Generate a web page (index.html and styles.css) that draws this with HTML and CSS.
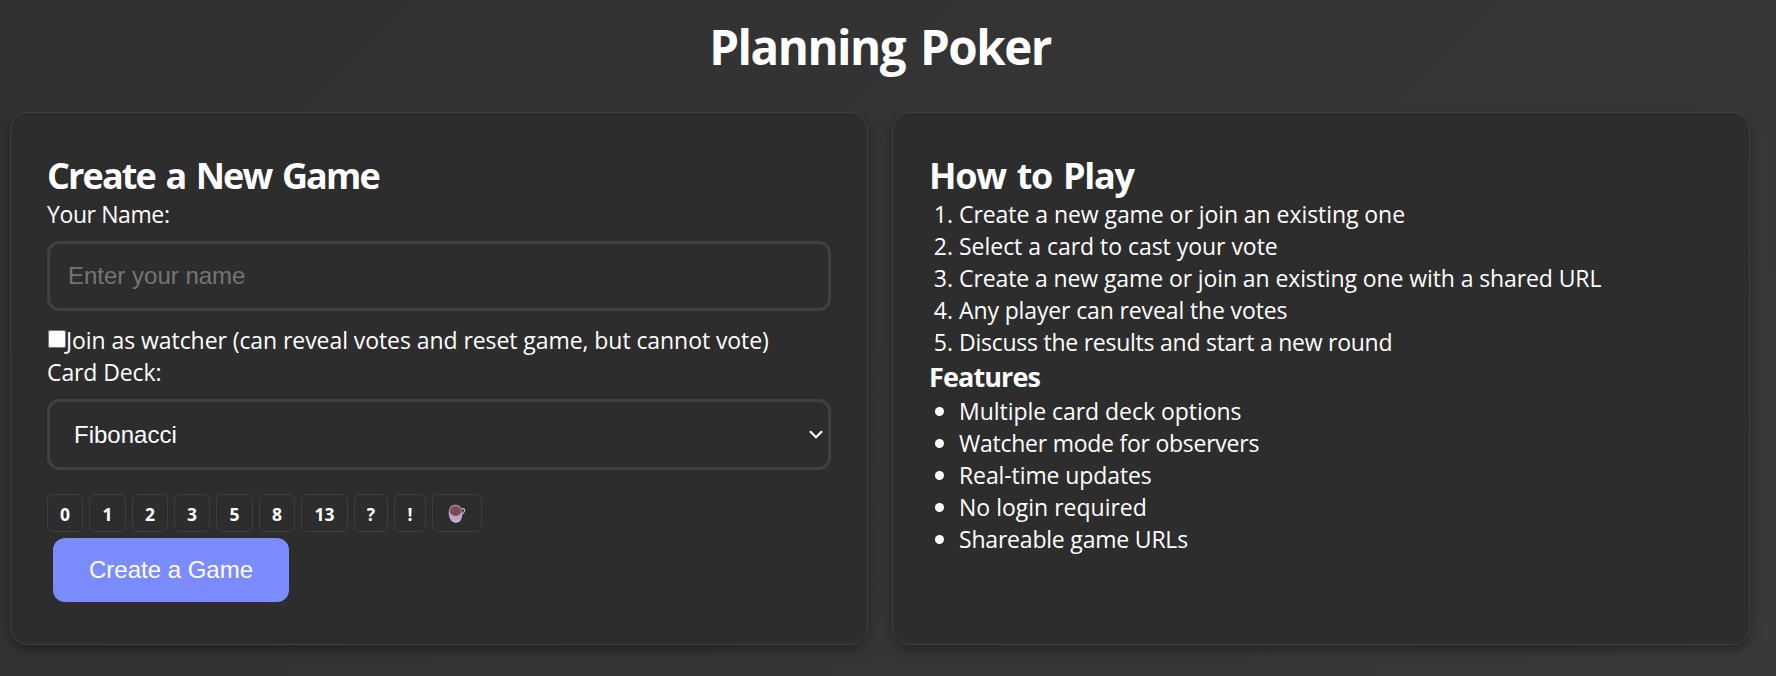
FILE: index.html
```html
<!DOCTYPE html>
<html lang="en">
<head>
<meta charset="utf-8">
<title>Planning Poker</title>
<link rel="stylesheet" href="styles.css">
</head>
<body>
<main class="page">
  <h1 class="title"><span>Planning Poker</span></h1>
  <div class="columns">
    <section class="card">
      <h2 class="heading"><span class="t-create">Create a New Game</span></h2>
      <label class="label t-name" for="name">Your Name:</label>
      <input class="field" id="name" type="text" placeholder="Enter your name">
      <label class="watcher"><input class="check" type="checkbox"><span class="t-join">Join as watcher (can reveal votes and reset game, but cannot vote)</span></label>
      <label class="label t-deck" for="deck">Card Deck:</label>
      <div class="select-wrap">
        <select class="field select" id="deck"><option>Fibonacci</option></select>
        <svg class="arrow" viewBox="0 0 14 9" width="14" height="9"><path d="M1 1.2 7 7.2 13 1.2" fill="none" stroke="#fff" stroke-width="2.200"/></svg>
      </div>
      <div class="deck">
        <span class="chip">0</span><span class="chip w37">1</span><span class="chip">2</span><span class="chip">3</span><span class="chip w37">5</span><span class="chip">8</span><span class="chip w47">13</span><span class="chip w34">?</span><span class="chip w32">!</span><span class="chip w50"><svg class="cup" viewBox="0 0 18 19" width="18" height="19"><path d="M13 5c2.200-1 4 0 3.500 1.800-.4 1.700-1.800 3.100-3.200 4.100" fill="none" stroke="#cbbbdc" stroke-width="1.200"/><path d="M.9 6C0 13 2.500 18.500 8 18.500S15 13 14 6z" fill="#b9a5ce"/><path d="M2.600 15c2 2.700 8 2.900 10.400-.3-.9 2.500-2.800 3.800-5.200 3.800-2.300 0-4.100-1.400-5.200-3.500z" fill="#d6c8e5"/><ellipse cx="7.400" cy="6" rx="6.300" ry="5.500" fill="#a07f92"/><ellipse cx="7.600" cy="7.200" rx="5.500" ry="4.800" fill="#7e4a4e"/></svg></span>
      </div>
      <button class="create" type="button">Create a Game</button>
    </section>
    <section class="card">
      <h2 class="heading"><span class="t-how">How to Play</span></h2>
      <ol class="list">
        <li><span class="s1">Create a new game or join an existing one</span></li>
        <li><span class="s2">Select a card to cast your vote</span></li>
        <li><span class="s3">Create a new game or join an existing one with a shared URL</span></li>
        <li><span class="s4">Any player can reveal the votes</span></li>
        <li><span class="s5">Discuss the results and start a new round</span></li>
      </ol>
      <h3 class="subheading">Features</h3>
      <ul class="bullets">
        <li><span class="f1">Multiple card deck options</span></li>
        <li><span class="f2">Watcher mode for observers</span></li>
        <li><span class="f3">Real-time updates</span></li>
        <li><span class="f4">No login required</span></li>
        <li><span class="f5">Shareable game URLs</span></li>
      </ul>
    </section>
  </div>
</main>
</body>
</html>
```
FILE: styles.css
```css
* { box-sizing: border-box; margin: 0; padding: 0; }
body {
  height: 676px;
  overflow: hidden;
  color: #fff;
  font: 23px/32px "Open Sans", "Noto Sans", sans-serif;
  background: linear-gradient(135deg, #303030, #393939);
}
.page { width: 1760px; padding: 14px 10px 0; }
.title { height: 98px; font-size: 47.500px; line-height: 66px; font-weight: 700; text-align: center; letter-spacing: -1.500px; word-spacing: 4px; }
.columns { display: grid; grid-template-columns: 858px 858px; gap: 24px; }
.card {
  height: 533px;
  padding: 38px 36px 0;
  background: #2d2d2d;
  border: 1px solid #404040;
  border-radius: 18px;
  box-shadow: 0 6px 12px rgba(0, 0, 0, .3);
}
.heading { height: 47px; font-size: 36px; line-height: 50px; font-weight: 700; }
.t-create { letter-spacing: -1.880px; word-spacing: 3px; }
.t-how { letter-spacing: -1.320px; word-spacing: 3px; }
.label { display: block; }
.t-name { letter-spacing: -.400px; }
.t-deck { letter-spacing: -.100px; }
.t-join { letter-spacing: -.070px; }
.field {
  display: block;
  width: 784px;
  height: 70px;
  margin: 11px 0 13px;
  padding: 0 18px;
  color: #fff;
  background: #2d2d2d;
  border: 3px solid #404040;
  border-radius: 12px;
  font: 24px "Liberation Sans", Arial, sans-serif;
}
.field::placeholder { color: #757575; }
.watcher { display: flex; height: 32px; }
.check { width: 18px; height: 18px; margin: 6px 0 0 1px; flex: none; }
.select-wrap { position: relative; margin-bottom: 24px; }
.select { height: 71px; margin-bottom: 0; padding-left: 24px; appearance: none; }
.arrow { position: absolute; right: 8px; top: 31px; }
.deck { display: flex; gap: 6px; height: 38px; margin-bottom: 6px; }
.chip {
  display: flex;
  align-items: center;
  justify-content: center;
  width: 36px;
  height: 38px;
  padding-top: 1px;
  border: 1px solid #404040;
  border-radius: 6px;
  font-size: 17.500px;
  font-weight: 700;
}
.w37 { width: 37px; }
.w47 { width: 47px; }
.w34 { width: 34px; }
.w32 { width: 32px; }
.w50 { width: 50px; }
.create {
  display: block;
  width: 236px;
  height: 64px;
  margin-left: 6px;
  color: #fff;
  background: #7b8cff;
  border: 0;
  border-radius: 12px;
  font: 24px "Liberation Sans", Arial, sans-serif;
}
.list { margin-bottom: 1px; padding-left: 30px; }
.bullets { list-style: none; }
.bullets li { display: flex; }
.bullets li::before {
  content: "";
  width: 9px;
  height: 9px;
  margin: 12px 15.500px 0 5.500px;
  background: #fff;
  border-radius: 50%;
}
.s1 { letter-spacing: -.060px; }
.s2 { letter-spacing: -.030px; }
.s3 { letter-spacing: -.100px; }
.s4 { letter-spacing: -.130px; }
.s5 { letter-spacing: -.250px; }
.f1 { letter-spacing: -.040px; }
.f2 { letter-spacing: -.250px; }
.f3 { letter-spacing: -.100px; }
.f5 { letter-spacing: -.200px; }
.subheading { height: 36px; font-size: 27px; line-height: 36px; font-weight: 700; letter-spacing: -.900px; }
```
